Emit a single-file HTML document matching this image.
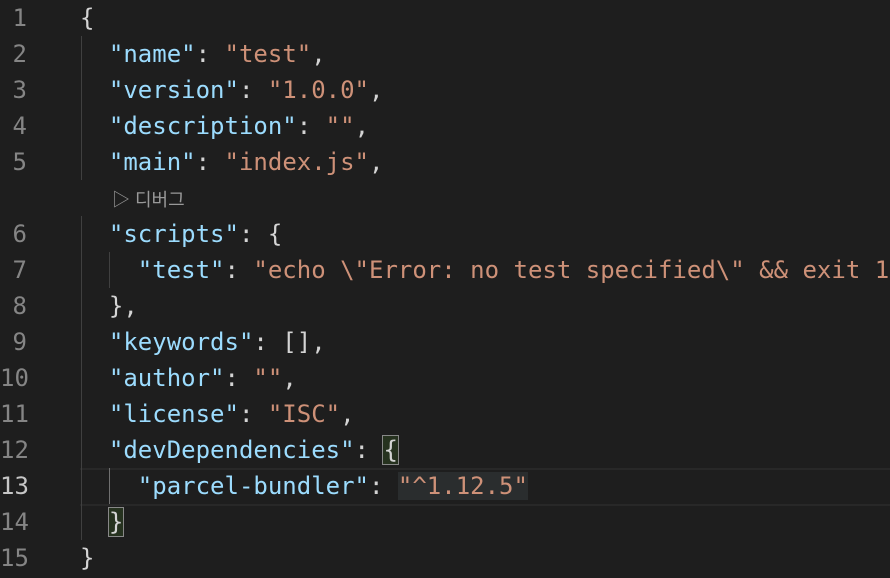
<!DOCTYPE html>
<html><head><meta charset="utf-8"><style>
body{margin:0;background:#1e1e1e;width:890px;height:578px;overflow:hidden;position:relative;font-family:"DejaVu Sans Mono","Liberation Mono",monospace;font-size:24px;}
.l{position:absolute;left:0;height:36px;line-height:36px;white-space:pre;width:890px}
.n{position:absolute;left:0;width:27px;text-align:right;color:#858585}
.c{position:absolute;left:80px;color:#d4d4d4}
.k{color:#9cdcfe}.s{color:#ce9178}
.g{position:absolute;width:1px;background:#404040}
.box{outline:1px solid #888;background:#26321f}
</style></head><body>
<div style="position:absolute;left:80px;top:468px;width:810px;height:34px;border-top:2px solid #282828;border-bottom:2px solid #282828"></div>
<div class="g" style="left:81px;top:36px;height:144px"></div>
<div class="g" style="left:81px;top:216px;height:324px"></div>
<div class="g" style="left:109px;top:252px;height:36px"></div>
<div class="g" style="left:109px;top:468px;height:36px;background:#707070"></div>
<div class="l" style="top:0"><span class="n">1</span><span class="c">{</span></div>
<div class="l" style="top:36px"><span class="n">2</span><span class="c">  <span class="k">"name"</span>: <span class="s">"test"</span>,</span></div>
<div class="l" style="top:72px"><span class="n">3</span><span class="c">  <span class="k">"version"</span>: <span class="s">"1.0.0"</span>,</span></div>
<div class="l" style="top:108px"><span class="n">4</span><span class="c">  <span class="k">"description"</span>: <span class="s">""</span>,</span></div>
<div class="l" style="top:144px"><span class="n">5</span><span class="c">  <span class="k">"main"</span>: <span class="s">"index.js"</span>,</span></div>
<div class="l" style="top:180px"><span style="position:absolute;left:112px;top:2px;font-family:'Liberation Sans','Noto Sans CJK KR',sans-serif;font-size:18px;color:#999">▷ 디버그</span></div>
<div class="l" style="top:216px"><span class="n">6</span><span class="c">  <span class="k">"scripts"</span>: {</span></div>
<div class="l" style="top:252px"><span class="n">7</span><span class="c">    <span class="k">"test"</span>: <span class="s">"echo \"Error: no test specified\" &amp;&amp; exit 1"</span></span></div>
<div class="l" style="top:288px"><span class="n">8</span><span class="c">  },</span></div>
<div class="l" style="top:324px"><span class="n">9</span><span class="c">  <span class="k">"keywords"</span>: [],</span></div>
<div class="l" style="top:360px"><span class="n">10</span><span class="c">  <span class="k">"author"</span>: <span class="s">""</span>,</span></div>
<div class="l" style="top:396px"><span class="n">11</span><span class="c">  <span class="k">"license"</span>: <span class="s">"ISC"</span>,</span></div>
<div class="l" style="top:432px"><span class="n">12</span><span class="c">  <span class="k">"devDependencies"</span>: <span class="box">{</span></span></div>
<div class="l" style="top:468px"><span class="n" style="color:#c6c6c6">13</span><span class="c">    <span class="k">"parcel-bundler"</span>: <span class="s" style="background:#2a2d2e">"^1.12.5"</span></span></div>
<div class="l" style="top:504px"><span class="n">14</span><span class="c">  <span class="box">}</span></span></div>
<div class="l" style="top:540px"><span class="n">15</span><span class="c">}</span></div>
</body></html>
